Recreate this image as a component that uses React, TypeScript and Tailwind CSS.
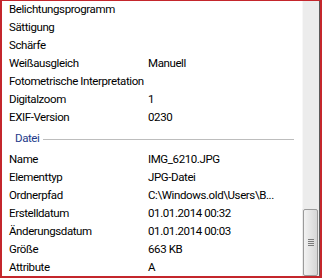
const photoRows: [string, string][] = [
  ['Belichtungsprogramm', ''],
  ['Sättigung', ''],
  ['Schärfe', ''],
  ['Weißausgleich', 'Manuell'],
  ['Fotometrische Interpretation', ''],
  ['Digitalzoom', '1'],
  ['EXIF-Version', '0230'],
];

const fileRows: [string, string][] = [
  ['Name', 'IMG_6210.JPG'],
  ['Elementtyp', 'JPG-Datei'],
  ['Ordnerpfad', 'C:\\Windows.old\\Users\\B...'],
  ['Erstelldatum', '01.01.2014 00:32'],
  ['Änderungsdatum', '01.01.2014 00:03'],
  ['Größe', '663 KB'],
  ['Attribute', 'A'],
];

const Row = ({ label, value }: { label: string; value: string }) => (
  <div className="flex h-[18px] items-center">
    <span className="w-[139px] shrink-0 whitespace-nowrap">{label}</span>
    <span className="whitespace-nowrap">{value}</span>
  </div>
);

export default function App() {
  return (
    <div
      className="flex h-[278px] w-[322px] overflow-hidden border-x-2 border-t border-b-2 border-[#c4262c] bg-white text-[11.5px] tracking-[-0.4px] text-black"
      style={{ fontFamily: 'Roboto, "Liberation Sans", Arial, sans-serif' }}
    >
      {/* Property list */}
      <div className="flex-1 overflow-hidden pl-[7px]">
        {photoRows.map(([l, v]) => (
          <Row key={l} label={l} value={v} />
        ))}

        {/* Group header */}
        <div className="flex h-[24px] items-center gap-[4px] pl-[6px] pr-[8px]">
          <span className="text-[#1e3a8a]">Datei</span>
          <div className="h-px flex-1 bg-[#bdbdbd]" />
        </div>

        {fileRows.map(([l, v]) => (
          <Row key={l} label={l} value={v} />
        ))}
      </div>

      {/* Scrollbar */}
      <div className="flex w-[18px] shrink-0 flex-col border-r border-[#5a5a5a] bg-[#ececec]">
        <div className="h-[208px] border-l border-[#f7f7f7]" />
        <div className="mx-px flex flex-1 items-center justify-center rounded-[2px] border border-[#9a9a9a] bg-gradient-to-r from-[#f2f2f2] to-[#d6d6d6]">
          <div className="flex flex-col gap-px">
            <div className="h-px w-[6px] bg-[#7a7a7a]" />
            <div className="h-px w-[6px] bg-[#7a7a7a]" />
            <div className="h-px w-[6px] bg-[#7a7a7a]" />
            <div className="h-px w-[6px] bg-[#7a7a7a]" />
          </div>
        </div>
      </div>
    </div>
  );
}
